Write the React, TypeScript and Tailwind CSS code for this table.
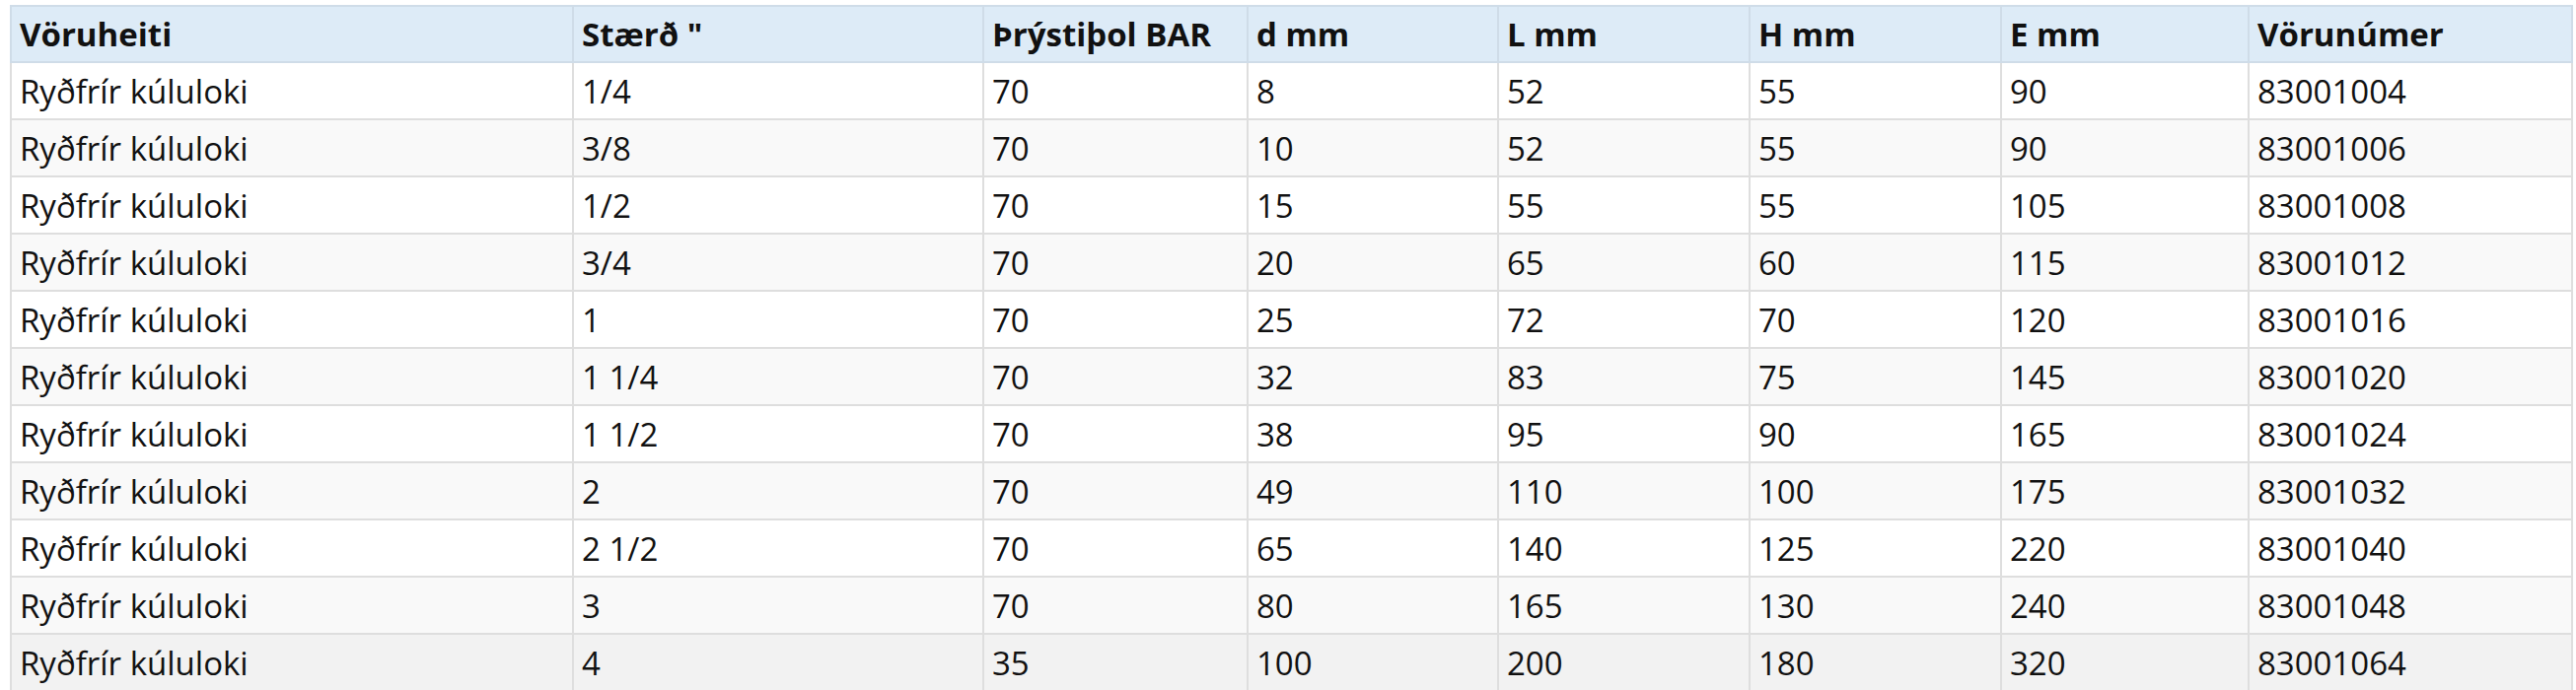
import React from 'react';

const headers = ['Vöruheiti', 'Stærð "', 'Þrýstiþol BAR', 'd mm', 'L mm', 'H mm', 'E mm', 'Vörunúmer'];

const rows: string[][] = [
  ['1/4', '70', '8', '52', '55', '90', '83001004'],
  ['3/8', '70', '10', '52', '55', '90', '83001006'],
  ['1/2', '70', '15', '55', '55', '105', '83001008'],
  ['3/4', '70', '20', '65', '60', '115', '83001012'],
  ['1', '70', '25', '72', '70', '120', '83001016'],
  ['1 1/4', '70', '32', '83', '75', '145', '83001020'],
  ['1 1/2', '70', '38', '95', '90', '165', '83001024'],
  ['2', '70', '49', '110', '100', '175', '83001032'],
  ['2 1/2', '70', '65', '140', '125', '220', '83001040'],
  ['3', '70', '80', '165', '130', '240', '83001048'],
  ['4', '35', '100', '200', '180', '320', '83001064'],
];

const colWidths = ['w-[570px]', 'w-[416px]', 'w-[268px]', 'w-[254px]', 'w-[255px]', 'w-[255px]', 'w-[251px]', 'w-[328px]'];

export default function App() {
  return (
    <div className="bg-white pt-[5px] pl-[10px] font-['Open_Sans',sans-serif] text-[#111]">
      <table className="w-[2597px] border-collapse table-fixed text-[33px]">
        <colgroup>
          {colWidths.map((w, i) => (
            <col key={i} className={w} />
          ))}
        </colgroup>
        <thead>
          <tr className="h-[57px] bg-[#ddebf7]">
            {headers.map((h) => (
              <th key={h} className="border-2 border-[#cfdce8] px-[8px] text-left font-bold leading-none">
                {h}
              </th>
            ))}
          </tr>
        </thead>
        <tbody>
          {rows.map((r, i) => (
            <tr
              key={r[6]}
              className={`h-[58px] ${i === rows.length - 1 ? 'bg-[#f2f2f2]' : i % 2 === 1 ? 'bg-[#f9f9f9]' : 'bg-white'}`}
            >
              <td className="border-2 border-[#dedede] px-[8px] leading-none">Ryðfrír kúluloki</td>
              {r.map((c, j) => (
                <td key={j} className="border-2 border-[#dedede] px-[8px] leading-none">
                  {c}
                </td>
              ))}
            </tr>
          ))}
        </tbody>
      </table>
    </div>
  );
}
